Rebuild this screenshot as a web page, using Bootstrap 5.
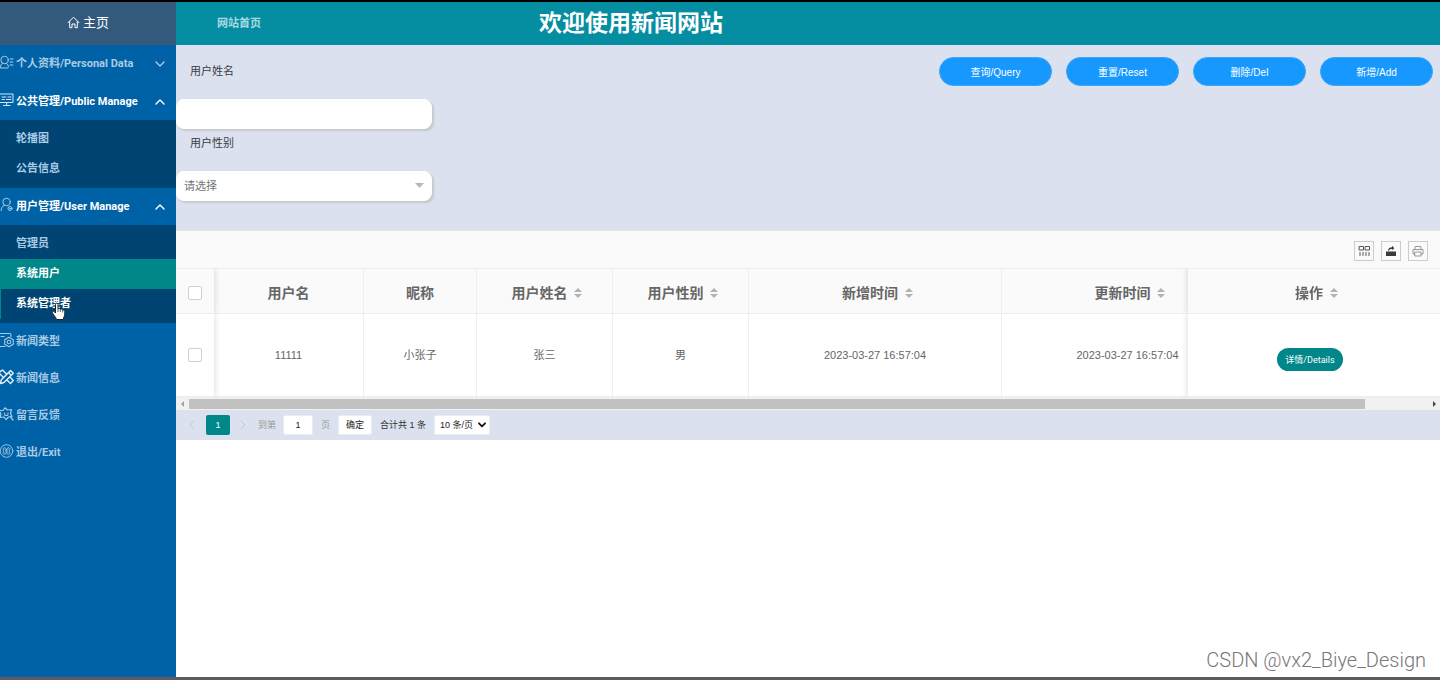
<!DOCTYPE html>
<html lang="zh-CN">
<head>
<meta charset="utf-8">
<meta name="viewport" content="width=device-width, initial-scale=1">
<title>欢迎使用新闻网站</title>
<link rel="stylesheet" href="https://cdn.jsdelivr.net/npm/bootstrap@5.3.0/dist/css/bootstrap.min.css">
<style>
:root { --teal: #008789; --sans: "Liberation Sans", "Noto Sans CJK SC", sans-serif; }
body { font-family: var(--sans); font-size: 11px; line-height: 16px; color: #333; background: #fff; }
a { text-decoration: none; }
.shell { border-top: 2px solid #000; border-bottom: 3px solid #5d5b5b; }
.side { width: 176px; background: #0062a6; font-family: Roboto, "Noto Sans CJK SC", sans-serif; font-weight: 700; }
.side a { color: #a9cbe3; }
.side .home-link { height: 43px; background: #33597d; color: #fff; font-size: 13px; font-weight: 400; gap: 3px; padding-bottom: 2px; }
.side .entry { height: 37px; gap: 2px; padding-right: 11px; }
.side .home-link + .entry { height: 38px; }
.side .entry svg { flex: none; }
.side .entry.open, .side .sub a.hot { color: #fff; }
.sub { background: #004473; padding: 4px 0; }
.sub a { height: 30px; padding-left: 16px; }
.side .sub a.current { background: var(--teal); color: #fff; }
.sub a.hot { border-left: 1px solid var(--teal); padding-left: 15px; }
.ico { fill: none; stroke: currentColor; stroke-linecap: round; stroke-linejoin: round; }
.pointer-hand { left: 50px; top: 13px; }
.topbar { height: 43px; background: #058da1; padding-bottom: 2px; }
.topbar a { color: #a9dbe1; font-weight: 700; padding-left: 41px; }
.topbar h1 { font-size: 23px; line-height: 28px; font-weight: 700; color: #fff; margin: 0 0 0 22%; }
.filters { background: #dce1ef; padding: 12px 7px 29px 0; }
.filters label { padding: 6px 14px; height: 42px; margin: 0; color: #3a3d45; }
.field { width: 256px; height: 30px; border: 1px solid #fff; border-radius: 8px; background-color: #fff; box-shadow: 2px 2px 2px #c6c8cc; padding: 0 7px; font-size: 11px; color: #757575; display: block; }
select { appearance: none; }
.caret-down { right: 8px; top: 12px; width: 9px; height: 5px; background: #b8b8b8; clip-path: polygon(0 0, 100% 0, 50% 100%); pointer-events: none; }
.act { width: 113px; height: 29px; border: 1px solid #3ba4f7; border-radius: 15px; background: #1698ff; color: #fff; font-size: 10px; line-height: 16px; padding: 2px 0 0; }
.tools { height: 38px; background: #fafafa; border-top: 1px solid #e8e8ea; padding: 2px 12px 0; gap: 7px; }
.tool { width: 20px; height: 20px; border: 1px solid #ccc; background: transparent; padding: 0; color: #555; }
.grid-data { width: 1330px; table-layout: fixed; border-collapse: separate; border-spacing: 0; text-align: center; color: #666; }
.grid-data th, .grid-data td { border-right: 1px solid #eee; border-bottom: 1px solid #eee; background: #fff; padding: 0; vertical-align: middle; }
.grid-data th { height: 46px; background: #fafafa; font-size: 14px; line-height: 20px; border-top: 1px solid #eee; padding-top: 3px; }
.grid-data th.sortable { padding-left: 5px; }
.grid-data td { height: 83px; }
.grid-data .pin-start { position: sticky; left: 0; border-right: 0; box-shadow: 1px 0 6px rgba(0,0,0,.13); clip-path: inset(0 -8px 0 0); }
.grid-data .pin-end { position: sticky; right: 0; border-right: 0; box-shadow: -1px 0 6px rgba(0,0,0,.13); clip-path: inset(0 0 0 -8px); }
.grid-data td.pin-end { padding-right: 8px; }
.grid-data input { appearance: none; width: 14px; height: 14px; border: 1px solid #d2d2d2; border-radius: 2px; background: #fff; display: block; margin: 0 auto; }
.sorter { margin-left: 3px; fill: #b2b2b2; vertical-align: 0; }
.detail { height: 23px; border: 0; border-radius: 12px; background: var(--teal); color: #fff; font: 9px/16px Roboto, "Noto Sans CJK SC", sans-serif; padding: 1px 8px 0; margin-top: 8px; }
.hbar { height: 13px; background: #f1f1f1; padding: 0 3px; border-top: 1px solid #eee; }
.hbar .track { margin: 0 4px; }
.hbar .thumb { width: 95%; height: 10px; background: #c1c1c1; }
.pager { height: 30px; background: #dce1ef; font-size: 9px; padding-left: 12px; }
.pager .num { width: 24px; height: 20px; background: var(--teal); color: #fff; border-radius: 2px; margin: 0 9px; }
.pager input, .pager button, .pager select { height: 20px; border: 1px solid #ececf0; border-radius: 2px; background: #fff; color: #222; font-size: 9px; padding: 0; }
.pager select { width: 56px; padding-left: 5px; }
.pager .chevron { right: 4px; top: 7px; pointer-events: none; }
.pager .muted { color: #999; }
.watermark { right: 14px; bottom: 5px; font: 300 20px/24px Roboto, sans-serif; color: #777; text-shadow: 1px 1px 0 #fff; }
</style>
</head>
<body>
<div class="shell d-flex min-vh-100 position-relative">
  <nav class="side flex-shrink-0" aria-label="主菜单">
    <a href="#" class="home-link d-flex align-items-center justify-content-center">
      <svg class="ico" width="13" height="13" viewBox="0 0 13 13" stroke-width="1"><path d="M1 6.700 6.500 1.200 12 6.700M2.700 5.500V11.700H5V8H8V11.700H10.300V5.500"/></svg>主页</a>
    <a href="#" class="entry d-flex align-items-center">
      <svg class="ico mb-1" width="14" height="15" viewBox="0 0 14 15"><circle cx="4.500" cy="5" r="3.700"/><path d="M2.500 8.200C1 9 .5 10.500.5 13H7.500C9 13 8.500 9.500 6.500 8.200M10 4H13M10 7H13M10 10H13"/></svg>
      <span class="flex-grow-1">个人资料/Personal Data</span>
      <svg class="ico" width="10" height="6" viewBox="0 0 10 6" stroke-width="1.400"><path d="M1 1 5 5 9 1"/></svg></a>
    <a href="#" class="entry open d-flex align-items-center">
      <svg class="ico mb-1" width="14" height="15" viewBox="0 0 14 15" color="#d5e5f1"><path d="M-1 2H13V10.500H-1M6.700 10.500V13M3.500 13.500H10M2 5H6M8 5H11M2 7.500H4.500M6.500 7.500H11"/></svg>
      <span class="flex-grow-1">公共管理/Public Manage</span>
      <svg class="ico" width="10" height="6" viewBox="0 0 10 6" stroke-width="1.400"><path d="M1 5 5 1 9 5"/></svg></a>
    <div class="sub">
      <a href="#" class="d-flex align-items-center">轮播图</a>
      <a href="#" class="d-flex align-items-center">公告信息</a>
    </div>
    <a href="#" class="entry open d-flex align-items-center">
      <svg class="ico mb-1" width="14" height="15" viewBox="0 0 14 15" color="#a9cbe3"><circle cx="6.500" cy="5" r="3.700"/><path d="M4.500 8.200C2.500 9 1.200 11 1 13.500"/><circle cx="10" cy="11.500" r="2"/><circle cx="10" cy="11.500" r=".5"/></svg>
      <span class="flex-grow-1">用户管理/User Manage</span>
      <svg class="ico" width="10" height="6" viewBox="0 0 10 6" stroke-width="1.400"><path d="M1 5 5 1 9 5"/></svg></a>
    <div class="sub">
      <a href="#" class="d-flex align-items-center">管理员</a>
      <a href="#" class="current d-flex align-items-center">系统用户</a>
      <a href="#" class="hot d-flex align-items-center position-relative">系统管理者
        <svg class="pointer-hand position-absolute" width="15" height="19" viewBox="0 0 15 19" fill="#fff" stroke="#222" stroke-width="1"><path d="M4.500 11V2.500C4.500.7 7 .7 7 2.500V7C7.500 6 9.200 6.300 9.300 7.500 10 6.700 11.500 7 11.700 8.300 12.500 7.700 13.800 8.200 13.800 9.500V12C13.800 14 12.500 15 12.300 17.500H5.500C5 15 2 12.500 1.300 10.700.800 9.300 2.500 8.800 3.300 9.800Z"/><path d="M7 7V10M9.300 7.500V10M11.700 8.500V10.500" stroke-width=".7"/></svg></a>
    </div>
    <a href="#" class="entry d-flex align-items-center">
      <svg class="ico mb-1" width="14" height="16" viewBox="0 0 14 16" stroke-width="1.100"><path d="M-1 1.500H9.500Q11 1.500 11 3V4.500M-1 14.500H5M1 4.500H4"/><path d="M9 5.200 13.300 7.700V12.200L9 14.700 4.700 12.200V7.700Z"/><circle cx="9" cy="10" r="1.800"/></svg>
      <span>新闻类型</span></a>
    <a href="#" class="entry d-flex align-items-center">
      <svg class="ico mb-1" width="14" height="16" viewBox="0 0 14 16" color="#dcebf5" stroke-width="1.500"><path d="M10.500 1.500 13.300 4.200 4 13.500 .5 14.500 1.200 11ZM8.500 3.500 11 6M-1 3.500 2.500 1 6 4.500M-1 4 3 8M10 8 13.300 11.500 10.500 14.500 7 11"/></svg>
      <span>新闻信息</span></a>
    <a href="#" class="entry d-flex align-items-center">
      <svg class="ico mb-1" width="14" height="16" viewBox="0 0 14 16" stroke-width="1.200"><path d="M-1 4.500 3 4.500 5 1.800 7.500 4 11.500 3.500 10.500 7.500 12 10.500 8.500 11 6 13.500 4 11 0 11.500 1 8Z"/><path d="M4.500 7V7.500M8 7V7.500M4.500 9Q6.500 10 8 9M10.500 11 13 14"/></svg>
      <span>留言反馈</span></a>
    <a href="#" class="entry d-flex align-items-center">
      <svg class="ico mb-1" width="14" height="16" viewBox="0 0 14 16" stroke-width=".9"><circle cx="6.500" cy="8" r="6.300"/><path d="M6.500 6.500C5.500 3.500 2 4.500 3.500 7.200Q4 8 3.500 8.800C2 11.500 5.500 12.500 6.500 9.500 7.500 12.500 11 11.500 9.500 8.800Q9 8 9.500 7.200C11 4.500 7.500 3.500 6.500 6.500ZM5 6.500 8 9.500M8 6.500 5 9.500"/></svg>
      <span>退出/Exit</span></a>
  </nav>

  <main class="flex-grow-1" style="min-width:0">
    <header class="topbar d-flex align-items-center">
      <a href="#">网站首页</a>
      <h1>欢迎使用新闻网站</h1>
    </header>

    <form class="filters d-flex justify-content-between align-items-start">
      <div>
        <label class="d-block" for="uname">用户姓名</label>
        <input class="field" id="uname" type="text">
        <label class="d-block" for="sex">用户性别</label>
        <div class="position-relative">
          <select class="field" id="sex"><option>请选择</option><option>男</option><option>女</option></select>
          <span class="caret-down position-absolute"></span>
        </div>
      </div>
      <div class="d-flex" style="gap:14px">
        <button type="button" class="btn act">查询/Query</button>
        <button type="button" class="btn act">重置/Reset</button>
        <button type="button" class="btn act">删除/Del</button>
        <button type="button" class="btn act">新增/Add</button>
      </div>
    </form>

    <div class="tools d-flex justify-content-end align-items-center">
      <button class="tool d-flex align-items-center justify-content-center" aria-label="筛选列"><svg class="ico" width="12" height="12" viewBox="0 0 12 12"><path d="M1.500 1.500H5.500V5H1.500ZM7.500 1.500H11.500V5H7.500ZM2 7.500V10.500M5 7.500V10.500M8 7.500V10.500M11 7.500V10.500"/></svg></button>
      <button class="tool d-flex align-items-center justify-content-center" aria-label="导出"><svg width="12" height="12" viewBox="0 0 12 12" fill="#3a3a40"><path d="M1 6.500H11V11H1ZM7 .8 9.500 3.200 7 5V4C5 4 4.500 4.500 4 5.500H3C3 3.500 4.500 2.300 7 2.200Z"/></svg></button>
      <button class="tool d-flex align-items-center justify-content-center" aria-label="打印"><svg class="ico" width="12" height="12" viewBox="0 0 12 12" color="#999"><path d="M3 4V1.500H9V4M3 9H1V4.500H11V9H9M3 7H9V11H3Z"/></svg></button>
    </div>

    <div class="overflow-hidden">
      <table class="grid-data">
        <colgroup><col style="width:38px"><col style="width:150px"><col style="width:113px"><col style="width:136px"><col style="width:136px"><col style="width:253px"><col style="width:252px"><col style="width:252px"></colgroup>
        <thead><tr>
          <th class="pin-start"><input type="checkbox" aria-label="全选"></th>
          <th>用户名</th><th>昵称</th>
          <th class="sortable">用户姓名 <svg class="sorter" width="8" height="10"><path d="M0 4 4 0 8 4ZM0 6H8L4 10Z"/></svg></th>
          <th class="sortable">用户性别 <svg class="sorter" width="8" height="10"><path d="M0 4 4 0 8 4ZM0 6H8L4 10Z"/></svg></th>
          <th class="sortable">新增时间 <svg class="sorter" width="8" height="10"><path d="M0 4 4 0 8 4ZM0 6H8L4 10Z"/></svg></th>
          <th class="sortable">更新时间 <svg class="sorter" width="8" height="10"><path d="M0 4 4 0 8 4ZM0 6H8L4 10Z"/></svg></th>
          <th class="pin-end sortable">操作 <svg class="sorter" width="8" height="10"><path d="M0 4 4 0 8 4ZM0 6H8L4 10Z"/></svg></th>
        </tr></thead>
        <tbody><tr>
          <td class="pin-start"><input type="checkbox" aria-label="选择 11111"></td>
          <td>11111</td><td>小张子</td><td>张三</td><td>男</td><td>2023-03-27 16:57:04</td><td>2023-03-27 16:57:04</td>
          <td class="pin-end"><button class="detail">详情/Details</button></td>
        </tr></tbody>
      </table>
    </div>
    <div class="hbar d-flex align-items-center">
      <svg width="6" height="6" fill="#a0a0a0"><path d="M5 0V6L2 3Z"/></svg>
      <div class="track flex-grow-1"><div class="thumb"></div></div>
      <svg width="6" height="6" fill="#444"><path d="M2 0V6L5 3Z"/></svg>
    </div>

    <div class="pager d-flex align-items-center">
      <svg class="ico" width="9" height="10" viewBox="0 0 9 10" color="#c6c8d0"><path d="M6 1 2 5 6 9"/></svg>
      <span class="num d-flex align-items-center justify-content-center">1</span>
      <svg class="ico" width="9" height="10" viewBox="0 0 9 10" color="#c6c8d0"><path d="M2 1 6 5 2 9"/></svg>
      <label class="muted" for="goto" style="margin:0 7px 0 10px">到第</label>
      <input id="goto" class="text-center" type="text" value="1" style="width:30px">
      <span class="muted" style="margin:0 8px">页</span>
      <button style="width:34px">确定</button>
      <span style="margin:0 8px">合计共 1 条</span>
      <div class="position-relative">
        <select class="d-block" aria-label="每页条数"><option>10 条/页</option><option>20 条/页</option></select>
        <svg class="ico chevron position-absolute" width="8" height="6" viewBox="0 0 8 6" color="#111" stroke-width="1.800"><path d="M1 1.300 4 4.300 7 1.300"/></svg>
      </div>
    </div>
  </main>
  <div class="watermark position-absolute">CSDN @vx2_Biye_Design</div>
</div>
<script src="https://cdn.jsdelivr.net/npm/bootstrap@5.3.0/dist/js/bootstrap.bundle.min.js"></script>
</body>
</html>
